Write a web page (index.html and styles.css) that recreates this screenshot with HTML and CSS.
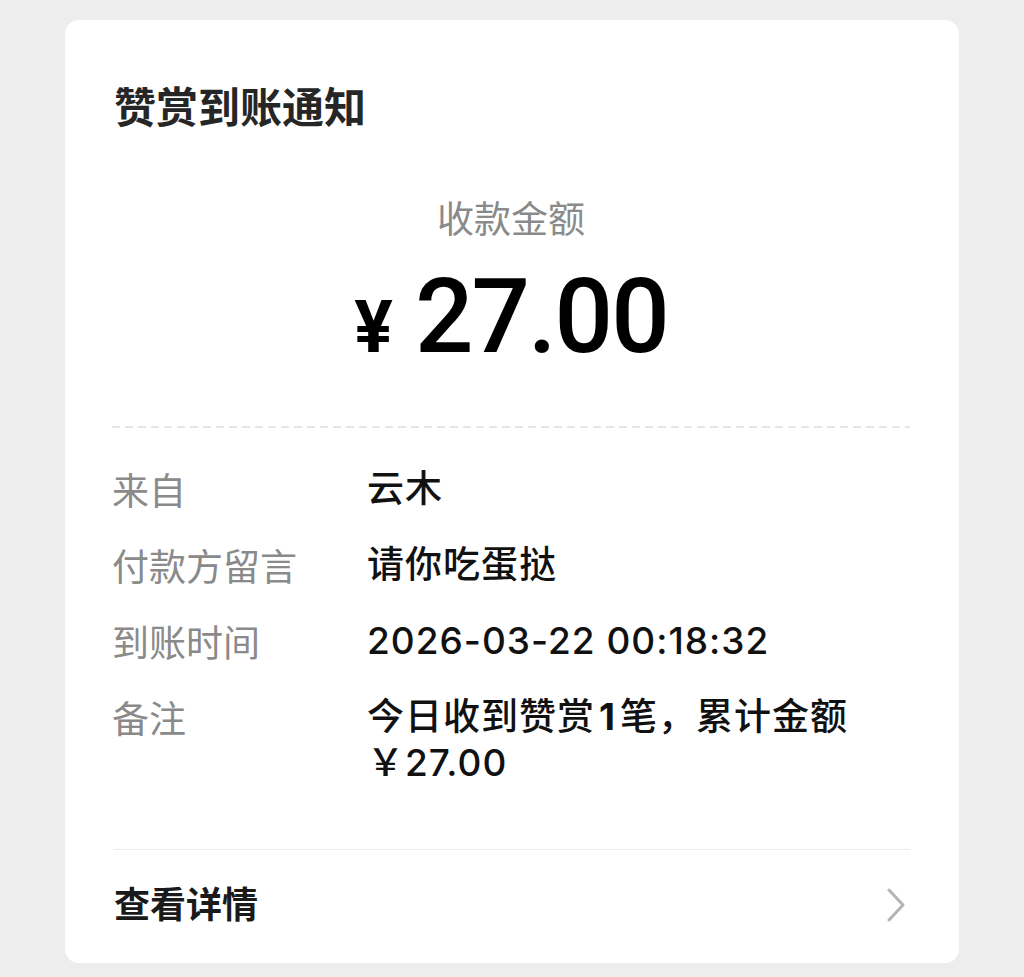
FILE: index.html
```html
<!DOCTYPE html>
<html lang="zh-CN">
<head>
  <meta charset="UTF-8">
  <meta name="viewport" content="width=device-width, initial-scale=1.0">
  <title>赞赏到账通知</title>
  <link rel="stylesheet" href="styles.css">
</head>
<body>
  <div class="card">
    <h1 class="title">赞赏到账通知</h1>

    <div class="amount-box">
      <div class="amount-label">收款金额</div>
      <div class="amount"><span class="yen">¥</span>27.00</div>
    </div>

    <div class="dashed"></div>

    <div class="rows">
      <div class="row">
        <div class="label">来自</div>
        <div class="value">云木</div>
      </div>
      <div class="row">
        <div class="label">付款方留言</div>
        <div class="value">请你吃蛋挞</div>
      </div>
      <div class="row">
        <div class="label">到账时间</div>
        <div class="value">2026-03-22 00:18:32</div>
      </div>
      <div class="row">
        <div class="label">备注</div>
        <div class="value">今日收到赞赏<span class="num">1</span>笔，累计金额<span class="nowrap">￥27.00</span></div>
      </div>
    </div>

    <a class="detail" href="#">
      <span>查看详情</span>
      <svg class="chevron" width="20" height="34" viewBox="0 0 20 34">
        <polyline points="3,2 17,17 3,32" fill="none" stroke="#b4b4b4" stroke-width="3" stroke-linecap="round" stroke-linejoin="round"/>
      </svg>
    </a>
  </div>
</body>
</html>
```

FILE: styles.css
```css
body {
  margin: 0;
  background-color: #ededed;
  font-family: "Inter", "Noto Sans CJK SC", sans-serif;
  color: #111;
}
.card {
  width: 894px;
  box-sizing: border-box;
  margin: 20px 0 0 65px;
  padding: 55px 49px 36px 47px;
  background: #fff;
  border-radius: 14px;
}
.title {
  margin: 0 0 0 2px;
  font-family: "Noto Sans CJK SC", sans-serif;
  font-size: 42px;
  font-weight: 700;
  line-height: 60px;
  color: #262626;
}
.amount-box {
  text-align: center;
  margin-top: 57px;
}
.amount-label {
  font-family: "Noto Sans CJK SC", sans-serif;
  font-size: 37px;
  line-height: 50px;
  color: #8a8a8a;
}
.amount {
  margin-top: 20px;
  font-family: "Roboto", sans-serif;
  font-size: 103px;
  font-weight: 500;
  letter-spacing: -2px;
  line-height: 110px;
  color: #000;
}
.yen {
  font-size: 72px;
  font-weight: 700;
  letter-spacing: 0;
  line-height: 1;
  margin-right: 22px;
}
.dashed {
  margin-top: 54px;
  height: 2px;
  background: repeating-linear-gradient(90deg, #e6e6e6 0 8px, transparent 8px 13px);
}
.rows {
  padding-top: 38px;
  display: flex;
  flex-direction: column;
  gap: 30px;
}
.row {
  display: grid;
  grid-template-columns: 255px 1fr;
  font-size: 37px;
  line-height: 46px;
}
.label {
  font-family: "Noto Sans CJK SC", sans-serif;
  color: #8a8a8a;
}
.value {
  font-weight: 500;
  letter-spacing: 1px;
  color: #111;
}
.num {
  font-weight: 700;
  margin: 0 4px;
}
.nowrap {
  white-space: nowrap;
}
.detail {
  display: flex;
  justify-content: space-between;
  align-items: center;
  margin: 63px 0 0 2px;
  padding-top: 27px;
  border-top: 1px solid #ececec;
  height: 50px;
  text-decoration: none;
  color: #1a1a1a;
  font-family: "Noto Sans CJK SC", sans-serif;
  font-size: 36px;
  font-weight: 700;
  line-height: 50px;
}
.chevron {
  margin: 6px 4px 0 0;
}
```
